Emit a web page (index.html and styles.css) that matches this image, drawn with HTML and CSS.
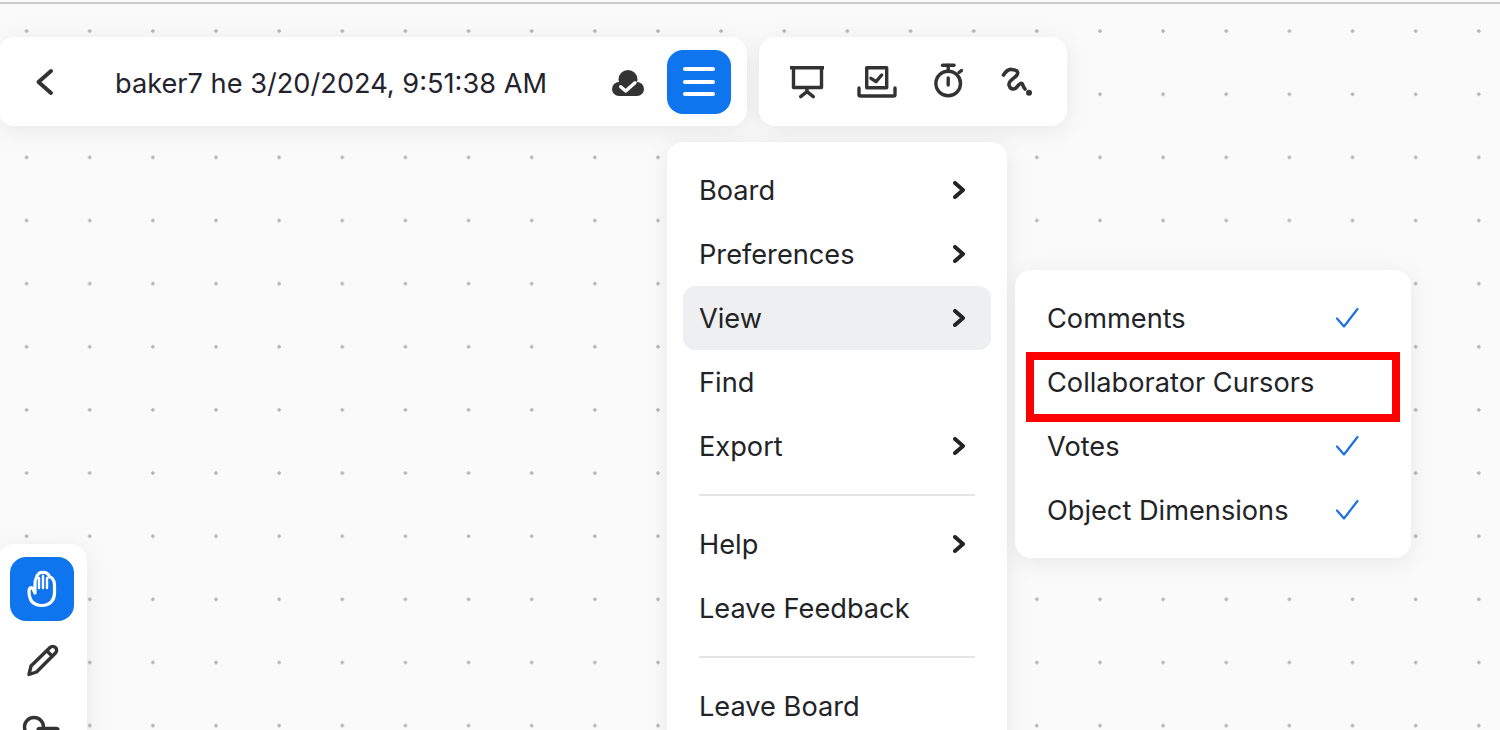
FILE: index.html
```html
<!DOCTYPE html>
<html lang="en">
<head>
    <meta charset="UTF-8">
    <meta name="viewport" content="width=device-width, initial-scale=1.0">
    <title>Board</title>
    <link rel="stylesheet" href="styles.css">
</head>
<body>
    <div class="board">
        <!-- Top toolbars -->
        <div class="topbar">
            <div class="panel title-panel">
                <button class="icon-button back-button" type="button">
                    <svg width="64" height="64" viewBox="0 0 64 64" fill="none" stroke="#333" stroke-width="4" stroke-linecap="round" stroke-linejoin="round"><path d="M39 21 L26.500 32 L39 43"/></svg>
                </button>
                <span class="board-title">baker7 he 3/20/2024, 9:51:38 AM</span>
                <svg class="cloud-icon" width="32" height="26" viewBox="0 0 32 26">
                    <g fill="#333"><circle cx="7" cy="19" r="7"/><circle cx="16" cy="9.500" r="9.500"/><circle cx="25" cy="19" r="7"/><rect x="7" y="14" width="18" height="12"/></g>
                    <path fill="none" stroke="#fff" stroke-width="3.400" stroke-linecap="round" stroke-linejoin="round" d="M8.700 16.700 L13.700 21 L23 12.700"/>
                </svg>
                <button class="icon-button icon-button-active" type="button">
                    <span class="menu-lines"><i></i><i></i><i></i></span>
                </button>
            </div>
            <div class="panel tools-panel">
                <button class="icon-button" type="button">
                    <svg width="64" height="64" viewBox="0 0 64 64" fill="none" stroke="#333" stroke-width="3.400" stroke-linecap="round" stroke-linejoin="round"><path d="M15 17.700 H49" stroke-linecap="butt"/><path d="M18.500 18 V37.500 H46.500 V18"/><path d="M32 38 V42"/><path d="M25.700 46.700 L32 41.700 L38.300 46.700"/></svg>
                </button>
                <button class="icon-button" type="button">
                    <svg width="64" height="64" viewBox="0 0 64 64" fill="none" stroke="#333" stroke-width="3.400" stroke-linecap="round" stroke-linejoin="round"><path d="M21.700 37.700 V17.700 H41.700 V37.700 Z"/><path d="M14 38 V44.500 Q14 46 15.500 46 H48.500 Q50 46 50 44.500 V38"/><path d="M26 28.300 L31 31.700 L36.700 25"/></svg>
                </button>
                <button class="icon-button" type="button">
                    <svg width="64" height="64" viewBox="0 0 64 64" fill="none" stroke="#333" stroke-width="3.400" stroke-linecap="round" stroke-linejoin="round"><circle cx="33.200" cy="33.500" r="12.300"/><path d="M27.500 15.300 H39"/><path d="M33.200 15.300 V20"/><path d="M44 22.500 L46.500 20.500"/><path d="M33.200 28 V35"/></svg>
                </button>
                <button class="icon-button" type="button">
                    <svg width="64" height="64" viewBox="0 0 64 64" fill="none" stroke="#333" stroke-width="3.600" stroke-linecap="round" stroke-linejoin="round"><path d="M18.500 25 C21 21 24 19 27 19.500 C31 20 34 21 32 25 C30 28 23 31 24 35 C25 39 28 40 31 38 C33 36 35 32 37 33.500 C38 34.500 38 37 40 39"/><circle cx="44" cy="42.700" r="3" fill="#333" stroke="none"/></svg>
                </button>
            </div>
        </div>

        <!-- Left tool palette -->
        <div class="panel palette">
            <button class="icon-button icon-button-active" type="button">
                <svg width="64" height="64" viewBox="0 0 64 64" fill="none" stroke="#fff" stroke-width="3.200" stroke-linecap="round" stroke-linejoin="round"><path d="M25 36 L23 32 C21 29.500 19 31 19 34 C19 43 23 48.500 32 48.500 C40 48.500 44.500 43 44.500 36 V28 C44.500 22 41 20 39.500 20 C38.500 16 35 15 33 15.500 C30 15 27 17 26.500 21 C25 22 25 25 25 28 V36"/><path d="M29 21 V31" stroke-width="2.400"/><path d="M33 19 V31" stroke-width="2.400"/><path d="M37 21 V31" stroke-width="2.400"/></svg>
            </button>
            <button class="icon-button" type="button">
                <svg width="64" height="64" viewBox="0 0 64 64" fill="none" stroke="#333" stroke-width="3.400" stroke-linecap="round" stroke-linejoin="round"><path d="M21 37 L40 18.500 C41.500 17 44 17 45.500 18.500 C47 20 47 22.500 45.500 24 L26.500 43 L19 45.500 Z"/><path d="M37 22 L42 27"/></svg>
            </button>
            <button class="icon-button" type="button">
                <svg width="64" height="64" viewBox="0 0 64 64" fill="none" stroke="#333" stroke-width="3.400" stroke-linecap="round" stroke-linejoin="round"><circle cx="24" cy="26" r="9.500"/><rect x="28" y="27.500" width="20" height="20" rx="2" fill="#fff"/></svg>
            </button>
        </div>

        <!-- Main menu -->
        <div class="panel menu main-menu">
            <div class="menu-item">Board<svg class="chevron" width="12" height="18" viewBox="0 0 12 18"><path d="M2 2 L10 9 L2 16"/></svg></div>
            <div class="menu-item">Preferences<svg class="chevron" width="12" height="18" viewBox="0 0 12 18"><path d="M2 2 L10 9 L2 16"/></svg></div>
            <div class="menu-item menu-item-open">View<svg class="chevron" width="12" height="18" viewBox="0 0 12 18"><path d="M2 2 L10 9 L2 16"/></svg></div>
            <div class="menu-item">Find</div>
            <div class="menu-item">Export<svg class="chevron" width="12" height="18" viewBox="0 0 12 18"><path d="M2 2 L10 9 L2 16"/></svg></div>
            <div class="menu-divider"></div>
            <div class="menu-item">Help<svg class="chevron" width="12" height="18" viewBox="0 0 12 18"><path d="M2 2 L10 9 L2 16"/></svg></div>
            <div class="menu-item">Leave Feedback</div>
            <div class="menu-divider"></div>
            <div class="menu-item">Leave Board</div>
        </div>

        <!-- View submenu -->
        <div class="panel menu sub-menu">
            <div class="menu-item">Comments<svg class="check" width="24" height="22" viewBox="0 0 24 22"><path d="M2 11.500 L9 19.500 L22.500 2"/></svg></div>
            <div class="menu-item">Collaborator Cursors</div>
            <div class="menu-item">Votes<svg class="check" width="24" height="22" viewBox="0 0 24 22"><path d="M2 11.500 L9 19.500 L22.500 2"/></svg></div>
            <div class="menu-item">Object Dimensions<svg class="check" width="24" height="22" viewBox="0 0 24 22"><path d="M2 11.500 L9 19.500 L22.500 2"/></svg></div>
        </div>

        <!-- Annotation around the row -->
        <div class="highlight-box"></div>
    </div>
</body>
</html>
```

FILE: styles.css
```css
/* Page */
body {
    font-family: Inter, "Liberation Sans", sans-serif;
    margin: 0;
    color: #222327;
    background-color: #fafafa;
}

.board {
    position: relative;
    overflow: hidden;
    border-top: 2px solid #cccccc;
    box-sizing: border-box;
    margin-top: 2px;
    height: 728px;
    background-color: #fafafa;
    background-image: radial-gradient(circle, #b4b4b4 1.4px, transparent 2px);
    background-size: 63.15px 63.15px;
    background-position: -5px -4.500px;
}

/* Panels */
.panel {
    background-color: #ffffff;
    border-radius: 16px;
    box-shadow: 0 4px 24px rgba(0, 0, 0, 0.08);
}

.icon-button {
    width: 64px;
    height: 64px;
    padding: 0;
    border: none;
    border-radius: 16px;
    background: none;
    flex-shrink: 0;
    display: flex;
    align-items: center;
    justify-content: center;
}

.icon-button-active {
    background-color: #0f75ee;
}

/* Top toolbars */
.topbar {
    position: absolute;
    top: 33px;
    left: -2px;
    display: flex;
    gap: 12px;
}

.title-panel {
    width: 749px;
    height: 89px;
    box-sizing: border-box;
    padding: 0 16px 0 14px;
    display: flex;
    align-items: center;
}

.board-title {
    margin-left: 39px;
    margin-top: 3px;
    font-size: 27.2px;
    color: #23232e;
    white-space: nowrap;
    flex: 1;
}

.cloud-icon {
    margin-right: 23px;
    margin-top: 2px;
}

.menu-lines {
    display: flex;
    flex-direction: column;
    gap: 8.500px;
    width: 32px;
}

.menu-lines i {
    display: block;
    height: 4px;
    border-radius: 2px;
    background-color: #ffffff;
}

.tools-panel {
    height: 89px;
    box-sizing: border-box;
    padding: 0 18px 0 16px;
    display: flex;
    align-items: center;
    gap: 6px;
}

/* Left palette */
.palette {
    position: absolute;
    left: -2px;
    top: 540px;
    width: 89px;
    height: 240px;
    box-sizing: border-box;
    padding: 13px 0 0 12px;
    display: flex;
    flex-direction: column;
    gap: 8px;
}

/* Menus */
.menu {
    position: absolute;
    box-sizing: border-box;
    padding: 16px;
}

.main-menu {
    left: 667px;
    top: 138px;
    width: 340px;
}

.sub-menu {
    left: 1015px;
    top: 266px;
    width: 396px;
}

.menu-item {
    height: 64px;
    box-sizing: border-box;
    padding: 0 16px;
    border-radius: 12px;
    display: flex;
    align-items: center;
    justify-content: space-between;
    font-size: 27.2px;
    white-space: nowrap;
}

.menu-item-open {
    background-color: #eeeff1;
}

.menu-divider {
    height: 2px;
    margin: 16px;
    background-color: #e4e4e6;
}

.chevron {
    margin-right: 10px;
    fill: none;
    stroke: #222327;
    stroke-width: 4;
    stroke-linecap: round;
    stroke-linejoin: round;
}

.check {
    margin-right: 20px;
    fill: none;
    stroke: #1a73e0;
    stroke-width: 2.200;
    stroke-linecap: round;
    stroke-linejoin: round;
}

/* Red annotation */
.highlight-box {
    position: absolute;
    left: 1026px;
    top: 348px;
    width: 374px;
    height: 70px;
    box-sizing: border-box;
    border: 8px solid #ff0000;
}
```
